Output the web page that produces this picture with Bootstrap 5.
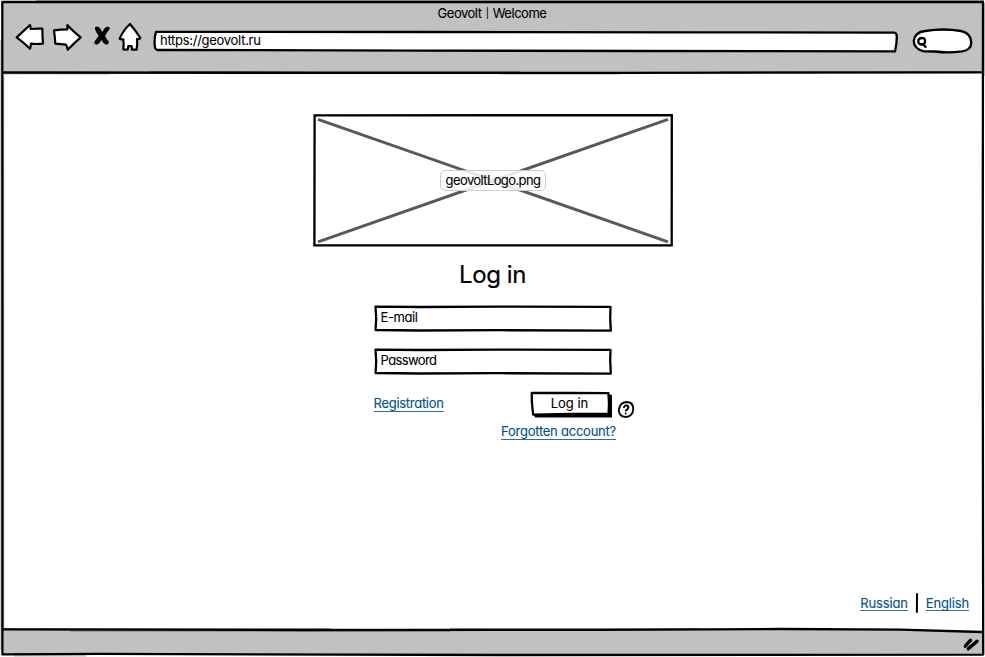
<!DOCTYPE html>
<html lang="en">
<head>
<meta charset="utf-8">
<meta name="viewport" content="width=device-width, initial-scale=1">
<title>Geovolt | Welcome</title>
<link href="https://cdn.jsdelivr.net/npm/bootstrap@5.3.0/dist/css/bootstrap.min.css" rel="stylesheet">
<style>
  body { font-family: Inter, "Liberation Sans", sans-serif; font-feature-settings: "cv11" 1; font-size: 13px; line-height: 16px; color: #000; background: #fff; overflow: hidden; -webkit-text-stroke: .1px currentColor; }
  /* A drawing and the content on top of it share one grid cell */
  .sketch { display: grid; grid-template: minmax(0, 1fr) / minmax(0, 1fr); }
  .sketch > * { grid-area: 1 / 1; }
  svg { display: block; overflow: visible; }
  .ink { fill: none; stroke: #000; stroke-width: 2.3; stroke-linejoin: round; stroke-linecap: round; }
  .filled { fill: #fff; }
  .thin { stroke-width: 1.9; }
  .grip { stroke-width: 3.4; }
  .icon-ink { fill: #fff; stroke: #000; stroke-width: 6.5; stroke-linejoin: round; stroke-linecap: round; }
  .browser { width: 985px; height: 657px; }
  .head { height: 73px; padding-top: 2px; }
  .title { height: 20px; padding-top: 3px; letter-spacing: -.48px; padding-right: 1px; }
  .divider-bar { font-size: 10px; vertical-align: 1px; margin: 0 1px; }
  .tools { height: 32px; padding-left: 15px; }
  .forward { margin-left: 7px; }
  .stop { margin-left: 11px; }
  .home { margin-left: 7px; }
  .search { margin-left: 14px; }
  .url { width: 745px; margin-left: 11px; }
  .url span { padding: 10px 0 0 7px; letter-spacing: -.28px; }
  .page { height: 557px; padding-top: 41px; }
  .logo { width: 360px; height: 132px; margin-left: 313px; }
  .logo-name { width: 106px; height: 21px; border: 1px solid #ccc; border-radius: 5px; background: rgba(255,255,255,.86); line-height: 18px; letter-spacing: -.6px; }
  .login-title { font-size: 24px; line-height: 30px; margin: 14px 0 0; font-weight: 400; letter-spacing: -.4px; -webkit-text-stroke: .2px #000; }
  .login { width: 264px; margin: 15px 0 0 373px; }
  .field { width: 240px; height: 27px; margin-bottom: 16px; }
  .field .form-control { background: transparent; border: 0; box-shadow: none; font-size: 13px; line-height: 16px; padding: 0 0 3px 7.5px; color: #000; letter-spacing: -.6px; font-feature-settings: "cv11" 1; }
  .field [type=email] { letter-spacing: -.4px; }
  .field .form-control::placeholder { color: #000; opacity: 1; }
  .ui-link { color: #004f8f; text-decoration: none; border-bottom: 1px solid #2b6ca3; line-height: 15px; letter-spacing: -.24px; }
  .register { margin: 5px auto 0 .5px; letter-spacing: -.28px; }
  .send { width: 82px; height: 27px; font: inherit; background: none; border: 0; padding: 0; color: #000; }
  .send span { padding: 4px 3px 0 0; }
  .help { margin: 9px 2px 0 5px; }
  .forgot { margin: 6px 0 0 128px; }
  .langs { padding-right: 16px; margin-bottom: 17px; letter-spacing: 0; }
  .langs .ui-link { letter-spacing: -.15px; line-height: 14px; }
</style>
</head>
<body>
<div class="browser sketch">
  <svg width="985" height="657" viewBox="0 0 985 657" aria-hidden="true">
    <path d="M2 2H983V73H2ZM2 630H890L983 632V655L2 654Z" fill="#c1c1c1"/>
    <path fill="none" stroke="#000" stroke-opacity=".35" d="M36 .6H984M1 40V650M3.7 76V630M984.2 3V76M4 73.9H110M150 71.6H520M500 74H620M720 71.6H980M4 628.5H330M70 631.1H450M450 628.5H700M14 655.9H86"/>
    <g class="ink">
      <path d="M2.3 2L983 2L982.7 300L983.2 654.6L500 655L100 653.9L2.4 654.4L2.4 300Z"/>
      <path d="M3 72.5L320 72.8L620 72.9L982 72.3M3 629.4L300 630L600 629.8L780 629L900 629.6L982 632"/>
      <path class="grip" d="M965.3 646.200L970.600 640.200M968.300 648.800L977 641.200"/>
    </g>
  </svg>
  <div class="d-flex flex-column">
    <header class="head">
      <div class="title text-center">Geovolt <span class="divider-bar">|</span> Welcome</div>
      <div class="tools d-flex">
        <svg width="30" height="32" viewBox="45 66 90 96"><path class="icon-ink" d="M50 112L90 75Q92 78 92 87Q110 85 127 86Q127 110 129 131Q108 133 93 131Q92 142 90 146Q73 129 50 112Z"/></svg>
        <svg class="forward" width="30" height="32" viewBox="156 66 90 96"><path class="icon-ink" d="M162 91Q182 88 202 88L202 75Q217 92 242 112Q222 130 203 149Q201 138 198 134L166 131Q165 112 162 91Z"/></svg>
        <svg class="stop" width="18" height="32" viewBox="279 66 54 96"><path d="M285 82Q293 76 300 85L307 96Q314 81 321 80Q331 79 329 86L315 107Q319 117 326 124Q328 134 318 134Q311 132 304 120Q298 133 289 134Q280 132 284 124L296 107Q283 91 285 82Z"/></svg>
        <svg class="home" width="24" height="32" viewBox="354 66 72 96"><path class="icon-ink" d="M390 72Q408 93 421 114Q418 118 411 117Q413 132 410 149H396L395 138H385L383 149L370 148Q372 132 370 118Q362 119 359 116Q370 90 390 72Z"/></svg>
        <div class="url sketch">
          <svg width="745" height="32" viewBox="153 22 745 32"><path class="ink filled" d="M156 31.8L420 32L700 32.3L894 32.6Q897 33 896.8 37Q896.8 44 895 51.4L640 51L420 50.6L158 50Q155 50 154.8 46Q154 38 156 31.8Z"/></svg>
          <span>https://geovolt.ru</span>
        </div>
        <svg class="search" width="61" height="32" viewBox="912 22 61 32">
          <path class="ink filled" d="M925 31Q944 28 961 31Q971 33 971.3 43Q971 50 962 51.4Q948 53.2 935 51.5L924 51.4Q914 49 913.7 41Q915 32 925 31Z"/>
          <path class="ink" d="M922.3 38Q918.3 38 918.2 41.5Q918.8 44.7 922 44.5Q925.7 43.8 925 40.3Q924.3 37.8 922.3 38ZM923.2 44.2L925.6 47"/>
        </svg>
      </div>
    </header>
    <main class="page d-flex flex-column">
      <div class="logo sketch">
        <svg width="360" height="132" viewBox="313 114 360 132"><path d="M318 119.3L668 241.8M318 241.8L668 119.3" stroke="#595959" stroke-width="3"/><path d="M314.6 115.3L671.8 115.2L671.7 245.4L314.4 245.3Z" fill="none" stroke="#000" stroke-width="2.3"/></svg>
        <div class="logo-name text-center align-self-center mx-auto">geovoltLogo.png</div>
      </div>
      <h1 class="login-title text-center">Log in</h1>
      <form class="login">
        <div class="field sketch">
          <svg width="240" height="27" viewBox="373 305 240 27"><path class="ink filled" d="M375.5 306.6L420 307L500 306.6L610.5 306.9L610.2 318L610.8 330.6L500 330.2L420 330.5L375.6 330L376.2 318Z"/></svg>
          <input class="form-control" type="email" placeholder="E-mail" aria-label="E-mail">
        </div>
        <div class="field sketch">
          <svg width="240" height="27" viewBox="373 305 240 27"><path class="ink filled" d="M375.5 306.6L420 307L500 306.6L610.5 306.9L610.2 318L610.8 330.6L500 330.2L420 330.5L375.6 330L376.2 318Z"/></svg>
          <input class="form-control" type="password" placeholder="Password" aria-label="Password">
        </div>
        <div class="d-flex align-items-start">
          <a class="ui-link register" href="#">Registration</a>
          <button class="send sketch" type="button">
            <svg width="82" height="27" viewBox="530 391 82 27"><path d="M534 414H608V394L612 395V417.5H535Z"/><path class="ink filled" d="M531.8 392.8L570 393L608.4 393.2Q609.5 403 608.6 413.6L570 413.9L533.2 414.6Q531.5 402 531.8 392.8Z"/></svg>
            <span>Log in</span>
          </button>
          <svg class="help" width="18" height="18" viewBox="617 400 18 18" role="img" aria-label="Help"><path class="ink thin" d="M626.5 402Q633 402 633.3 408.5Q632.8 416.8 625.6 417Q619 416.5 618.8 410.3Q619.4 402.6 626.5 402Z"/><path class="ink thin" d="M624 407.4Q624.4 405.4 626.4 405.4Q628.6 405.7 628.3 407.6Q627.6 409.4 625.9 410.6M625.6 413.5V413.6"/></svg>
        </div>
        <div class="forgot d-flex"><a class="ui-link" href="#">Forgotten account?</a></div>
      </form>
      <div class="langs d-flex justify-content-end align-items-center mt-auto">
        <a class="ui-link" href="#">Russian</a>
        <svg class="mx-2" width="2" height="20" viewBox="0 0 2 20"><path d="M1 .3L.9 19.7" stroke="#000" stroke-width="2"/></svg>
        <a class="ui-link" href="#">English</a>
      </div>
    </main>
  </div>
</div>
<script src="https://cdn.jsdelivr.net/npm/bootstrap@5.3.0/dist/js/bootstrap.bundle.min.js"></script>
</body>
</html>
